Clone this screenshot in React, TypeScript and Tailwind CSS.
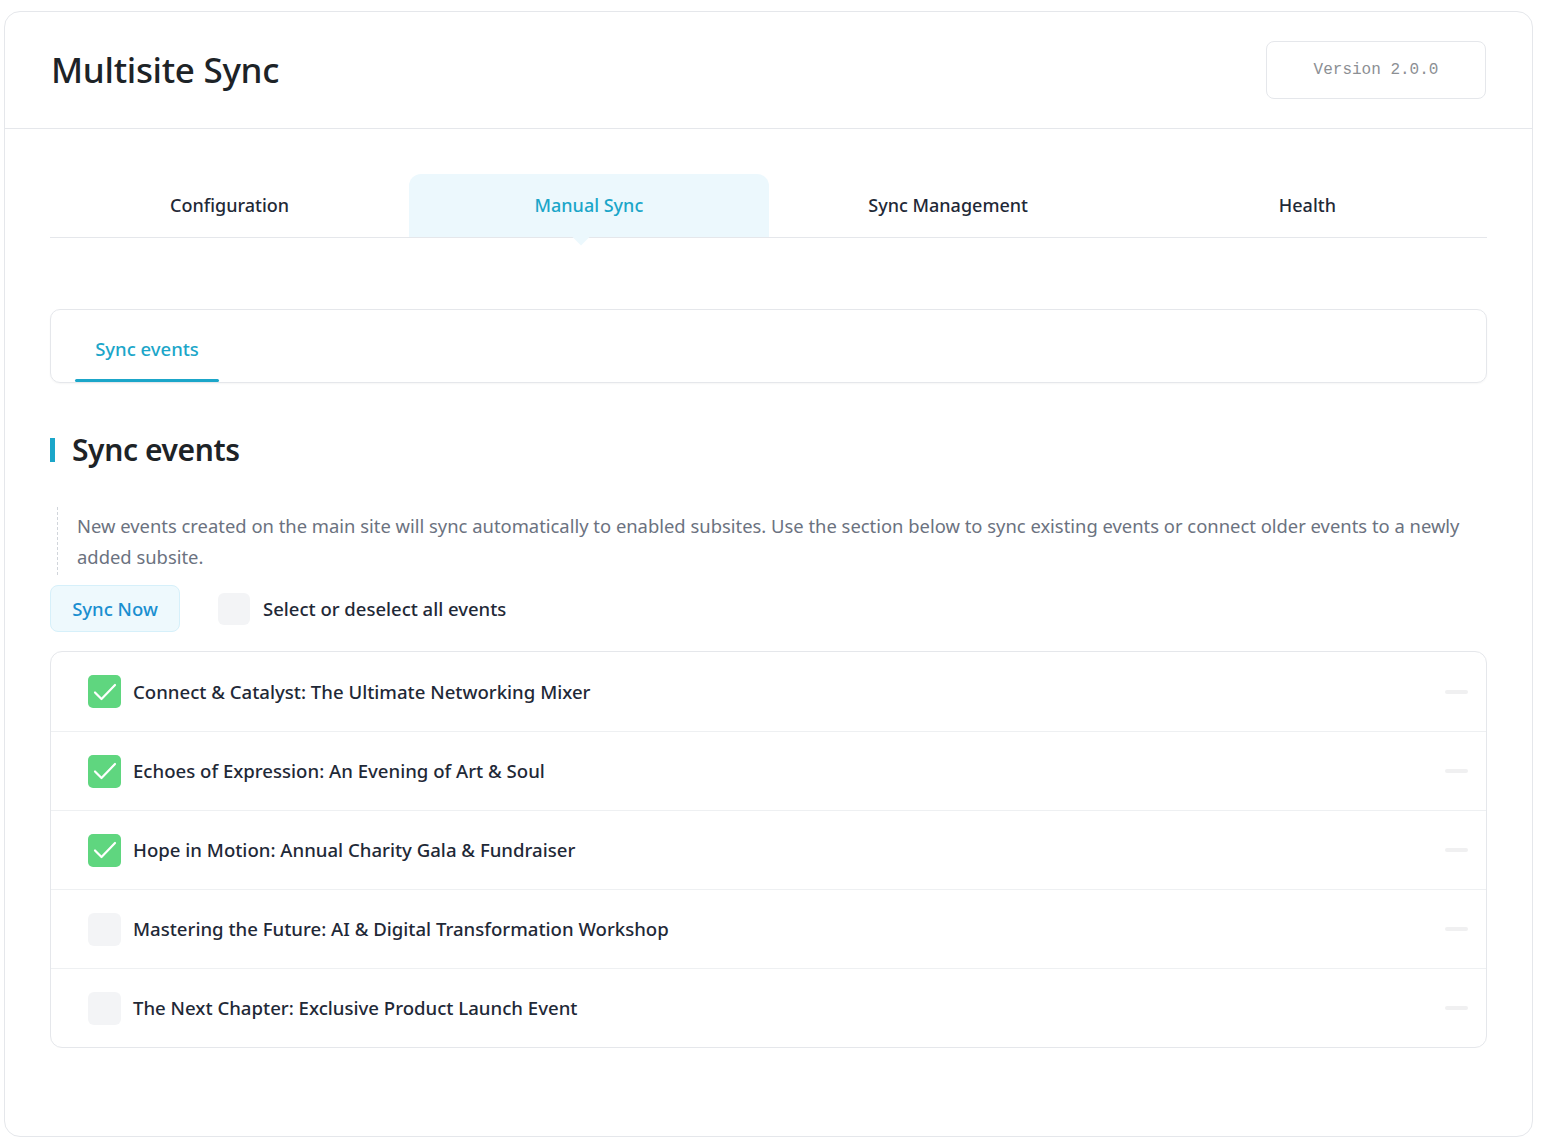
const tabs = ["Configuration", "Manual Sync", "Sync Management", "Health"];

const events = [
  { title: "Connect & Catalyst: The Ultimate Networking Mixer", checked: true },
  { title: "Echoes of Expression: An Evening of Art & Soul", checked: true },
  { title: "Hope in Motion: Annual Charity Gala & Fundraiser", checked: true },
  { title: "Mastering the Future: AI & Digital Transformation Workshop", checked: false },
  { title: "The Next Chapter: Exclusive Product Launch Event", checked: false },
];

function Check({ checked }: { checked: boolean }) {
  if (!checked) {
    return <div className="h-[33px] w-[33px] shrink-0 rounded-[6px] bg-[#f3f4f6]" />;
  }
  return (
    <div className="flex h-[33px] w-[33px] shrink-0 items-center justify-center rounded-[5px] bg-[#5fd67f]">
      <svg width="26" height="20" viewBox="0 0 26 20" fill="none">
        <path d="M3 10.5 L9.5 17 L23 3" stroke="white" strokeWidth="2.2" strokeLinecap="round" strokeLinejoin="round" />
      </svg>
    </div>
  );
}

export default function App() {
  return (
    <div className="min-h-screen bg-white pt-[11px] pb-[11px] pl-[4px] pr-[8px] font-['Noto_Sans',sans-serif] text-[#1f2937]">
      <div className="h-[1126px] rounded-[16px] border border-[#e5e7eb]">
        <div className="flex h-[117px] items-center justify-between border-b border-[#e5e7eb] px-[46px]">
          <h1 className="text-[35px] font-medium tracking-[-0.3px] text-[#1d2327]">Multisite Sync</h1>
          <div className="flex h-[58px] w-[220px] items-center justify-center rounded-[8px] border border-[#e5e7eb] font-['Liberation_Mono',monospace] text-[16px] text-[#8c8f94]">
            Version 2.0.0
          </div>
        </div>

        <div className="px-[45px] pt-[45px]">
          <div className="grid grid-cols-4 border-b border-[#e5e7eb]">
            {tabs.map((t) => {
              const active = t === "Manual Sync";
              return (
                <div
                  key={t}
                  className={
                    active
                      ? "relative flex h-[63px] items-center justify-center rounded-t-[12px] bg-[#ecf8fd] text-[18px] font-medium text-[#1ba6c9]"
                      : "flex h-[63px] items-center justify-center text-[18px] font-medium text-[#1f2937]"
                  }
                >
                  {t}
                  {active && (
                    <div className="absolute -bottom-[6px] left-1/2 h-[12px] w-[12px] -translate-x-[14px] rotate-45 bg-[#ecf8fd]" />
                  )}
                </div>
              );
            })}
          </div>

          <div className="mt-[71px] flex h-[74px] items-end rounded-[10px] border border-[#e5e7eb] px-[24px] shadow-[0_1px_2px_rgba(0,0,0,0.04)]">
            <div className="flex h-full w-[144px] flex-col">
              <div className="flex flex-1 items-center justify-center pt-[8px] text-[18.5px] font-medium text-[#1ba6c9]">Sync events</div>
              <div className="h-[3px] rounded-full bg-[#1ba6c9]" />
            </div>
          </div>

          <div className="mt-[44px] flex items-center gap-[17px]">
            <div className="h-[24px] w-[5px] bg-[#1ba6c9]" />
            <h2 className="text-[30px] font-semibold tracking-[-0.4px] text-[#1d2327]">Sync events</h2>
          </div>

          <div className="mt-[35px] ml-[7px] border-l border-dashed border-[#d1d5db] py-[3px] pl-[19px] pr-[20px] text-[18.4px] leading-[31px] text-[#6b7280]">
            New events created on the main site will sync automatically to enabled subsites. Use the section below to sync existing events or connect older events to a newly added subsite.
          </div>

          <div className="mt-[10px] flex items-center">
            <button className="flex h-[47px] w-[130px] items-center justify-center rounded-[8px] border border-[#d6f0fa] bg-[#eef9fd] text-[18.5px] font-medium text-[#1a8fd0]">
              Sync Now
            </button>
            <div className="ml-[38px] h-[32px] w-[32px] rounded-[6px] bg-[#f3f4f6]" />
            <span className="ml-[13px] text-[18.5px] font-medium text-[#1f2937]">Select or deselect all events</span>
          </div>

          <div className="mt-[19px] rounded-[12px] border border-[#e5e7eb]">
            {events.map((e, i) => (
              <div
                key={e.title}
                className={
                  i === 0
                    ? "flex h-[79px] items-center pl-[37px] pr-[18px]"
                    : "flex h-[79px] items-center border-t border-[#eef0f2] pl-[37px] pr-[18px]"
                }
              >
                <Check checked={e.checked} />
                <span className="ml-[12px] flex-1 text-[18.6px] font-medium text-[#1f2937]">{e.title}</span>
                <div className="h-[4px] w-[23px] rounded-full bg-[#f0f0f1]" />
              </div>
            ))}
          </div>
        </div>
      </div>
    </div>
  );
}
